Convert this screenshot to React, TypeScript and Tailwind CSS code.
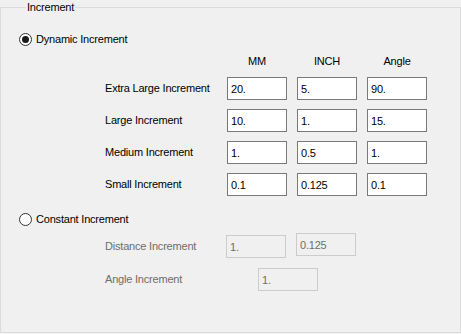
import { useState } from "react";

type Mode = "dynamic" | "constant";

const rows = [
  { label: "Extra Large Increment", mm: "20.", inch: "5.", angle: "90." },
  { label: "Large Increment", mm: "10.", inch: "1.", angle: "15." },
  { label: "Medium Increment", mm: "1.", inch: "0.5", angle: "1." },
  { label: "Small Increment", mm: "0.1", inch: "0.125", angle: "0.1" },
];

function Radio({ checked, label, onSelect }: { checked: boolean; label: string; onSelect: () => void }) {
  return (
    <button type="button" onClick={onSelect} className="flex h-[14px] items-center gap-[4px] text-left">
      <span className="flex h-[13px] w-[13px] items-center justify-center rounded-full border border-[#333333] bg-white">
        {checked && <span className="h-[7px] w-[7px] rounded-full bg-[#1a1a1a]" />}
      </span>
      <span className="leading-[14px]">{label}</span>
    </button>
  );
}

function Field({ value, disabled, className }: { value: string; disabled?: boolean; className?: string }) {
  return (
    <input
      defaultValue={value}
      disabled={disabled}
      className={
        "h-[23px] w-[60px] border pl-[3px] outline-none " +
        (disabled ? "border-[#cccccc] bg-[#f0f0f0] text-[#6d6d6d] " : "border-[#7a7a7a] bg-white text-black ") +
        (className ?? "")
      }
    />
  );
}

export default function App() {
  const [mode, setMode] = useState<Mode>("dynamic");

  return (
    <div className="h-[334px] w-[461px] bg-[#f0f0f0] font-['Liberation_Sans',Arial,sans-serif] text-[11px] tracking-[-0.2px] text-black">
      <fieldset className="h-[333px] w-[461px] border border-[#dcdcdc] pl-[18px]">
        <legend className="ml-[7px] px-[1px] leading-[14px]">Increment</legend>

        {/* Dynamic */}
        <div className="mt-[18px]">
          <Radio checked={mode === "dynamic"} label="Dynamic Increment" onSelect={() => setMode("dynamic")} />
        </div>

        <div className="ml-[86px]">
          <div className="mt-[8px] grid h-[14px] grid-cols-[112px_60px_60px_60px] gap-x-[10px] leading-[14px]">
            <span />
            <span className="text-center">MM</span>
            <span className="text-center">INCH</span>
            <span className="text-center">Angle</span>
          </div>

          <div className="mt-[9px] grid grid-cols-[112px_60px_60px_60px] gap-x-[10px] gap-y-[9px]">
            {rows.map((r) => (
              <div key={r.label} className="contents">
                <span className="flex items-center">{r.label}</span>
                <Field value={r.mm} />
                <Field value={r.inch} />
                <Field value={r.angle} />
              </div>
            ))}
          </div>
        </div>

        {/* Constant */}
        <div className="mt-[16px]">
          <Radio checked={mode === "constant"} label="Constant Increment" onSelect={() => setMode("constant")} />
        </div>

        <div className="ml-[86px] text-[#6d6d6d]">
          <div className="mt-[7px] grid grid-cols-[111px_60px_60px] items-start gap-x-[10px]">
            <span className="mt-[2px] flex h-[23px] items-center">Distance Increment</span>
            <Field value="1." disabled className="mt-[2px]" />
            <Field value="0.125" disabled />
          </div>
          <div className="mt-[10px] flex items-center">
            <span className="w-[153px]">Angle Increment</span>
            <Field value="1." disabled />
          </div>
        </div>
      </fieldset>
    </div>
  );
}
